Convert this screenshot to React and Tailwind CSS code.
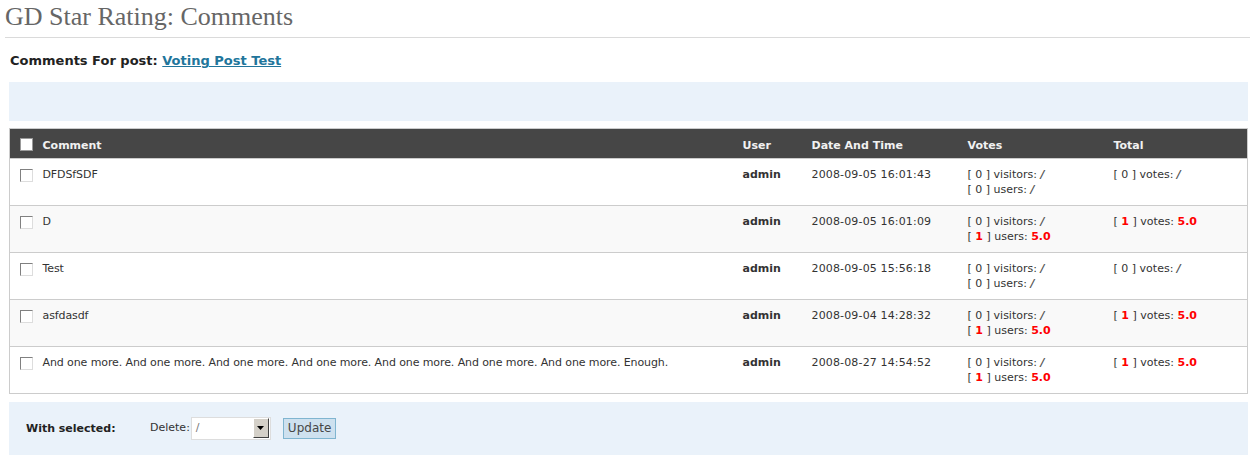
import React from 'react';

const rows = [
  { id: 1, text: 'DFDSfSDF', date: '2008-09-05 16:01:43', visitors: 0, users: 0, total: 0 },
  { id: 2, text: 'D', date: '2008-09-05 16:01:09', visitors: 0, users: 1, total: 1 },
  { id: 3, text: 'Test', date: '2008-09-05 15:56:18', visitors: 0, users: 0, total: 0 },
  { id: 4, text: 'asfdasdf', date: '2008-09-04 14:28:32', visitors: 0, users: 1, total: 1 },
  {
    id: 5,
    text: 'And one more. And one more. And one more. And one more. And one more. And one more. And one more. Enough.',
    date: '2008-08-27 14:54:52',
    visitors: 0,
    users: 1,
    total: 1,
  },
];

function Count({ n }) {
  return (
    <>
      [ {n > 0 ? <span className="font-bold text-[#ff0000]">{n}</span> : n} ]
    </>
  );
}

function Score({ n }) {
  if (n > 0) return <span className="font-bold text-[#ff0000]">5.0</span>;
  return <span className="font-bold italic text-[#555]">/</span>;
}

function Box({ light }) {
  return (
    <span
      className={
        'inline-block w-[13px] h-[13px] border align-middle ' +
        (light ? 'bg-white border-[#999]' : 'bg-white border-t-[#808080] border-l-[#808080] border-r-[#ddd] border-b-[#ddd]')
      }
    />
  );
}

export default function App() {
  return (
    <div className="bg-white min-h-[464px] text-[#333] font-['DejaVu_Sans',Verdana,sans-serif] text-[11px]">
      <div className="pl-[5px] pr-[8px]">
        <h2 className="font-['Liberation_Serif',Georgia,serif] text-[26px] leading-[34px] text-[#666] pt-[0px] pb-[3px] border-b border-[#dadada]">
          GD Star Rating: Comments
        </h2>
      </div>

      <div className="px-[9px] pr-[10px]">
        <div className="pt-[13px] pb-[11px] text-[13px] font-bold text-[#222] pl-[1px]">
          Comments For post:{' '}
          <a href="#" className="text-[#21759b] underline">Voting Post Test</a>
        </div>

        <div className="h-[39px] bg-[#eaf2fa]" />

        <table className="mt-[7px] w-full border-collapse border border-[#ccc]">
          <thead>
            <tr className="bg-[#464646] text-[#f1f1f1] font-bold text-left h-[30px]">
              <th className="w-[33px] pl-[10px] pt-[4px]"><Box light /></th>
              <th className="text-left font-bold pt-[7px]">Comment</th>
              <th className="text-left font-bold w-[69px] pt-[7px]">User</th>
              <th className="text-left font-bold w-[156px] pt-[7px]">Date And Time</th>
              <th className="text-left font-bold w-[146px] pt-[7px]">Votes</th>
              <th className="text-left font-bold w-[134px] pt-[7px]">Total</th>
            </tr>
          </thead>
          <tbody>
            {rows.map((r, i) => (
              <tr key={r.id} className={'border-t border-[#ccc] align-top h-[47px] ' + (i % 2 ? 'bg-[#f9f9f9]' : 'bg-white')}>
                <td className="pl-[10px] pt-[9px]"><Box /></td>
                <td className="pt-[8px] leading-[15px] tracking-[-0.1px]">{r.text}</td>
                <td className="pt-[8px] leading-[15px] font-bold">admin</td>
                <td className="pt-[8px] leading-[15px] tracking-[0.15px]">{r.date}</td>
                <td className="pt-[8px] leading-[15px]">
                  <div>[ 0 ] visitors: <Score n={0} /></div>
                  <div><Count n={r.users} /> users: <Score n={r.users} /></div>
                </td>
                <td className="pt-[8px] leading-[15px]">
                  <Count n={r.total} /> votes: <Score n={r.total} />
                </td>
              </tr>
            ))}
          </tbody>
        </table>

        <div className="mt-[8px] h-[53px] bg-[#eaf2fa] flex items-center pl-[17px]">
          <span className="font-bold text-[#222] w-[124px] pt-[3px]">With selected:</span>
          <span className="mr-[1px]">Delete:</span>
          <div className="flex items-center h-[23px] w-[80px] bg-white border border-[#ddd]">
            <span className="flex-1 pl-[4px] text-[#777]">/</span>
            <span className="w-[16px] h-[20px] mr-[1px] bg-[#d4d0c8] border border-t-white border-l-white border-r-[#404040] border-b-[#404040] flex items-center justify-center">
              <svg width="7" height="4" viewBox="0 0 7 4"><path d="M0 0h7L3.5 4z" fill="#000" /></svg>
            </span>
          </div>
          <button className="ml-[12px] h-[21px] px-[4px] bg-[#cee1ef] border border-[#80b5d0] text-[12px] text-[#464646]">
            Update
          </button>
        </div>
      </div>
    </div>
  );
}
